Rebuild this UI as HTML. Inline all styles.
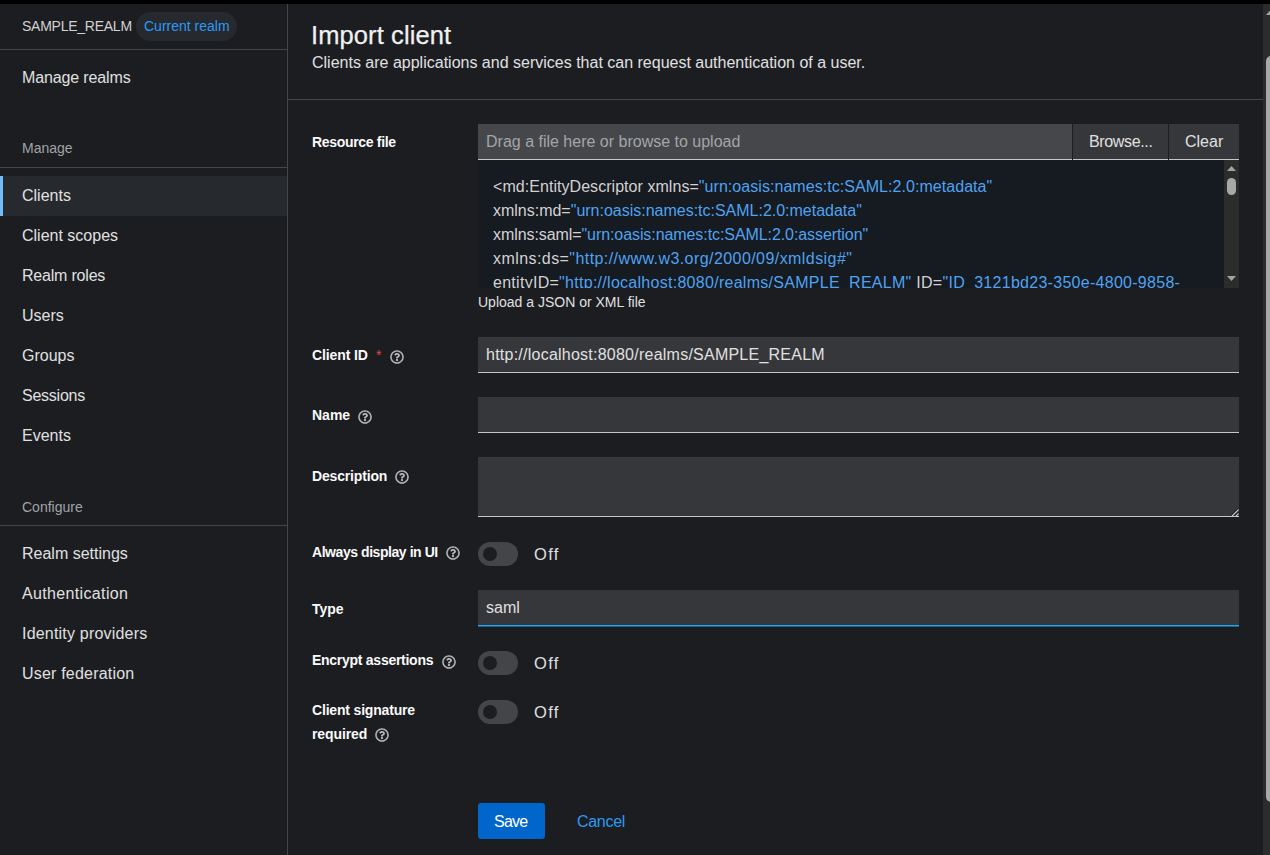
<!DOCTYPE html>
<html><head><meta charset="utf-8">
<style>
*{margin:0;padding:0;box-sizing:border-box}
html,body{width:1270px;height:855px;overflow:hidden;background:#1b1d21;font-family:"Liberation Sans",sans-serif;color:#e0e0e0}
.a{position:absolute;white-space:nowrap}
.t14{font-size:14px;line-height:20px}
.t16{font-size:16px;line-height:24px}
.b{font-weight:bold;color:#fafafa}
#top{position:absolute;left:0;top:0;width:1270px;height:4px;background:#000}
#side{position:absolute;left:0;top:4px;width:287px;height:851px;background:#1b1d21}
#sideb{position:absolute;left:287px;top:4px;width:1px;height:851px;background:#444548}
.hl{position:absolute;height:1px;background:#444548}
.badge{position:absolute;left:136px;top:12px;width:101px;height:29px;border-radius:15px;background:#26292d}
.active{position:absolute;left:0;top:176px;width:287px;height:40px;background:#26292d}
.activebar{position:absolute;left:0;top:176px;width:3px;height:40px;background:#73bcf7}
.gray{color:#a0a3a6}
.blue{color:#4fa3f0}
.input{position:absolute;left:478px;width:761px;background:#36373a;border-bottom:1px solid #c7c7c7}
.help{position:absolute;width:14px;height:14px}
.toggle{position:absolute;left:478px;width:40px;height:24px;border-radius:12px;background:#444548}
.toggle:after{content:"";position:absolute;left:5px;top:5px;width:14px;height:14px;border-radius:7px;background:#1b1d21}
#sb{position:absolute;left:1263px;top:4px;width:7px;height:851px;background:#2c2c2c}
</style></head><body>
<svg width="0" height="0" style="position:absolute"><defs><symbol id="q" viewBox="0 0 512 512"><path fill="#b8bbbe" d="M256 8C119.043 8 8 119.083 8 256c0 136.997 111.043 248 248 248s248-111.003 248-248C504 119.083 392.957 8 256 8zm0 448c-110.532 0-200-89.431-200-200 0-110.495 89.472-200 200-200 110.491 0 200 89.471 200 200 0 110.53-89.431 200-200 200zm107.244-255.2c0 67.052-72.421 68.084-72.421 92.863V300c0 6.627-5.373 12-12 12h-45.647c-6.627 0-12-5.373-12-12v-8.659c0-35.745 27.1-50.034 47.579-61.516 17.561-9.845 28.324-16.541 28.324-29.579 0-17.246-21.999-28.693-39.784-28.693-23.189 0-33.894 10.977-48.942 29.969-4.057 5.12-11.46 6.071-16.666 2.124l-27.824-21.098c-5.107-3.872-6.251-11.066-2.644-16.363C184.846 131.491 214.94 112 261.794 112c49.071 0 101.45 38.304 101.45 88.8zM298 368c0 23.159-18.841 42-42 42s-42-18.841-42-42 18.841-42 42-42 42 18.841 42 42z"/><circle cx="256" cy="256" r="205" fill="none" stroke="#b8bbbe" stroke-width="20"/></symbol></defs></svg>
<div id="top"></div>
<div id="side"></div>
<div id="sideb"></div>

<!-- sidebar -->
<div class="a t14" style="left:22px;top:16px;color:#d2d2d2;letter-spacing:-0.25px">SAMPLE_REALM</div>
<div class="badge"></div>
<div class="a t14" style="left:144px;top:16px;color:#2b9af3">Current realm</div>
<div class="hl" style="left:0;top:49px;width:287px"></div>
<div class="a t16" style="left:22px;top:66px;letter-spacing:-0.13px">Manage realms</div>
<div class="a t14 gray" style="left:22px;top:138px">Manage</div>
<div class="hl" style="left:0;top:167px;width:287px"></div>
<div class="active"></div><div class="activebar"></div>
<div class="a t16" style="left:22px;top:184px">Clients</div>
<div class="a t16" style="left:22px;top:224px">Client scopes</div>
<div class="a t16" style="left:22px;top:264px;letter-spacing:-0.2px">Realm roles</div>
<div class="a t16" style="left:22px;top:304px">Users</div>
<div class="a t16" style="left:22px;top:344px">Groups</div>
<div class="a t16" style="left:22px;top:384px;letter-spacing:-0.24px">Sessions</div>
<div class="a t16" style="left:22px;top:424px">Events</div>
<div class="a t14 gray" style="left:22px;top:497px">Configure</div>
<div class="hl" style="left:0;top:525px;width:287px"></div>
<div class="a t16" style="left:22px;top:542px">Realm settings</div>
<div class="a t16" style="left:22px;top:582px;letter-spacing:0.35px">Authentication</div>
<div class="a t16" style="left:22px;top:622px;letter-spacing:0.2px">Identity providers</div>
<div class="a t16" style="left:22px;top:662px;letter-spacing:0.2px">User federation</div>

<!-- header -->
<div class="a" style="left:311px;top:20px;font-size:25.5px;line-height:30px;color:#f0f0f0;-webkit-text-stroke:0.25px #f0f0f0;letter-spacing:0.1px">Import client</div>
<div class="a t16" style="left:312px;top:51px">Clients are applications and services that can request authentication of a user.</div>
<div class="hl" style="left:288px;top:99px;width:975px"></div>

<!-- form -->
<div class="a t14 b" style="left:312px;top:132px;letter-spacing:-0.32px">Resource file</div>
<div class="a" style="left:478px;top:124px;width:594px;height:36px;background:#45474b;border-bottom:1px solid #c7c7c7"></div>
<div class="a t16" style="left:486px;top:130px;color:#a3a5a8">Drag a file here or browse to upload</div>
<div class="a" style="left:1073px;top:124px;width:95px;height:36px;background:#36373a;border-bottom:1px solid #c7c7c7"></div>
<div class="a t16" style="left:1089px;top:130px;letter-spacing:-0.35px">Browse...</div>
<div class="a" style="left:1169px;top:124px;width:70px;height:36px;background:#36373a;border-bottom:1px solid #c7c7c7"></div>
<div class="a t16" style="left:1185px;top:130px">Clear</div>
<div class="a" style="left:478px;top:160px;width:761px;height:128px;background:#161a21;overflow:hidden;color:#d2d2d2">
 <div class="a t16" style="left:15px;top:15px;letter-spacing:0.05px">&lt;md:EntityDescriptor xmlns=<span class="blue">"urn:oasis:names:tc:SAML:2.0:metadata"</span></div>
 <div class="a t16" style="left:15px;top:39px;letter-spacing:-0.01px">xmlns:md=<span class="blue">"urn:oasis:names:tc:SAML:2.0:metadata"</span></div>
 <div class="a t16" style="left:15px;top:63px;letter-spacing:-0.08px">xmlns:saml=<span class="blue">"urn:oasis:names:tc:SAML:2.0:assertion"</span></div>
 <div class="a t16" style="left:15px;top:87px;letter-spacing:0.43px">xmlns:ds=<span class="blue">"http://www.w3.org/2000/09/xmldsig#"</span></div>
 <div class="a t16" style="left:15px;top:111px;letter-spacing:0.28px">entityID=<span class="blue">"http://localhost:8080/realms/SAMPLE_REALM"</span> ID=<span class="blue">"ID_3121bd23-350e-4800-9858-</span></div>
 <div class="a" style="left:746px;top:0;width:15px;height:128px;background:#2c2c2c"></div>
 <svg class="a" style="left:748px;top:5px" width="11" height="7"><polygon points="1,6 5.5,1 10,6" fill="#a3a3a3"/></svg>
 <div class="a" style="left:749px;top:18px;width:9px;height:17px;border-radius:4.5px;background:#a8a8a8"></div>
 <svg class="a" style="left:748px;top:115px" width="11" height="7"><polygon points="1,1 10,1 5.5,6" fill="#a3a3a3"/></svg>
</div>
<div class="a t14" style="left:478px;top:292px">Upload a JSON or XML file</div>

<div class="a t14 b" style="left:312px;top:345px;letter-spacing:-0.1px">Client ID</div>
<div class="a t14" style="left:376px;top:345px;color:#f0443b">*</div>
<div class="input" style="top:337px;height:36px"></div>
<div class="a t16" style="left:486px;top:343px;letter-spacing:0.24px">http://localhost:8080/realms/SAMPLE_REALM</div>

<div class="a t14 b" style="left:312px;top:405px">Name</div>
<div class="input" style="top:397px;height:36px"></div>

<div class="a t14 b" style="left:312px;top:466px;letter-spacing:-0.16px">Description</div>
<div class="input" style="top:457px;height:60px"></div>

<div class="a t14 b" style="left:312px;top:542px;letter-spacing:-0.44px">Always display in UI</div>
<div class="toggle" style="top:542px"></div>
<div class="a t16" style="left:534px;top:542px;font-size:16.5px;letter-spacing:1.3px">Off</div>

<div class="a t14 b" style="left:312px;top:599px">Type</div>
<div class="input" style="top:590px;height:36px;border-bottom:1px solid #1fa7f8;box-shadow:0 0.5px 0 #1fa7f8"></div>
<div class="a t16" style="left:486px;top:596px">saml</div>

<div class="a t14 b" style="left:312px;top:650px;letter-spacing:-0.27px">Encrypt assertions</div>
<div class="toggle" style="top:651px"></div>
<div class="a t16" style="left:534px;top:651px;font-size:16.5px;letter-spacing:1.3px">Off</div>

<div class="a t14 b" style="left:312px;top:698px;line-height:24px"><span style="letter-spacing:-0.18px">Client signature</span><br><span style="letter-spacing:-0.1px">required</span></div>
<div class="toggle" style="top:700px"></div>
<div class="a t16" style="left:534px;top:700px;font-size:16.5px;letter-spacing:1.3px">Off</div>

<div class="a" style="left:478px;top:803px;width:67px;height:36px;background:#0066cc;border-radius:3px"></div>
<div class="a t16" style="left:494px;top:810px;color:#fff;letter-spacing:-0.76px">Save</div>
<div class="a t16" style="left:577px;top:810px;color:#2b9af3;letter-spacing:-0.29px">Cancel</div>


<svg class="help" style="left:390px;top:350px"><use href="#q"/></svg>
<svg class="help" style="left:358px;top:410px"><use href="#q"/></svg>
<svg class="help" style="left:395px;top:470px"><use href="#q"/></svg>
<svg class="help" style="left:446px;top:546px"><use href="#q"/></svg>
<svg class="help" style="left:442px;top:655px"><use href="#q"/></svg>
<svg class="help" style="left:375px;top:728px"><use href="#q"/></svg>
<div id="sb"></div>
<svg class="a" style="left:1263px;top:8px" width="7" height="8"><polygon points="3,7 7,2.5 7,7" fill="#a3a3a3"/></svg>
<div class="a" style="left:1266px;top:56px;width:10px;height:746px;border-radius:5px;background:#a8a8a8"></div>
<svg class="a" style="left:1229px;top:507px" width="10" height="10"><path d="M2.5 9.5 L9.5 2.5 M6.5 9.5 L9.5 6.5" stroke="#c7c7c7" stroke-width="1.2"/><path d="M1.5 9 L9 1.5 M5.5 9 L9 5.5" stroke="#000" stroke-width="1" opacity="0.7"/></svg>
</body></html>
